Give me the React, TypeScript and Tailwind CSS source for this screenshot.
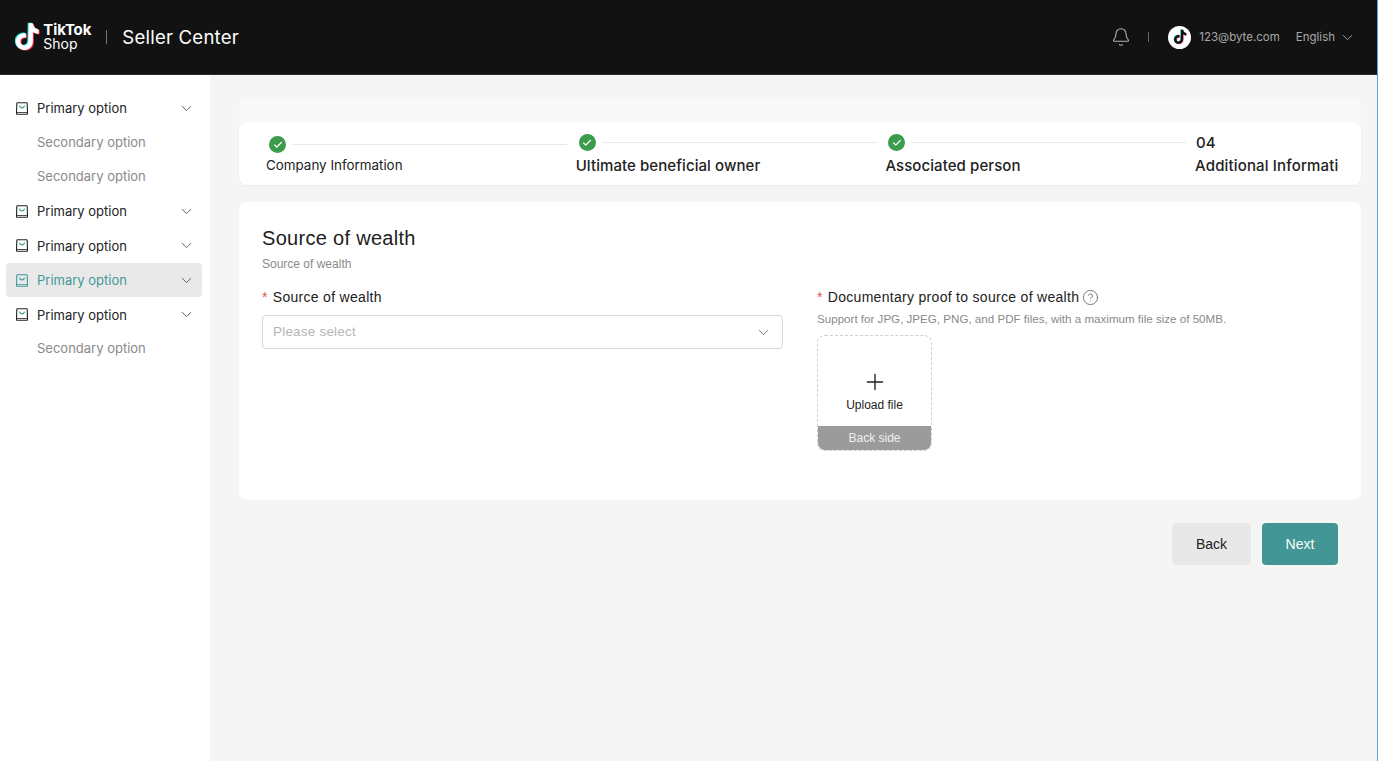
import { ChevronDown, Bell, Check, Plus, CircleHelp } from "lucide-react";

const sans = "font-['Inter',sans-serif]";
const arial = "font-['Liberation_Sans',sans-serif]";

function Note({ h }: { h: number }) {
  const d = "M14.6 1.5h3.3c.3 2.7 1.9 4.6 4.6 4.9v3.4c-1.7.1-3.2-.4-4.6-1.3v7.4c0 4-3 6.9-6.7 6.9-4 0-6.9-3.1-6.9-6.700 0-4.200 3.600-7.300 8-6.600v3.600c-2.300-.6-4.400.9-4.400 3 0 1.800 1.400 3.100 3.100 3.100 1.800 0 3.300-1.300 3.300-3.500z";
  return (
    <svg height={h} width={(h * 21) / 24} viewBox="2.800 0.500 21 24" className="shrink-0">
      <path d={d} fill="#25f4ee" transform="translate(-.8 -.5)" />
      <path d={d} fill="#fe2c55" transform="translate(.8 .5)" />
      <path d={d} fill="currentColor" />
    </svg>
  );
}

function BagIcon({ active }: { active?: boolean }) {
  const c = active ? "#3f9a96" : "#222222";
  return (
    <svg width="12" height="13" viewBox="0 0 12 13" fill="none" className="shrink-0">
      <path d="M1.500.7h9a.7.7 0 0 1 .7.7l.3 9.600v.5a.8.8 0 0 1-.8.8H1.300a.8.8 0 0 1-.8-.8V11l.3-9.600a.7.7 0 0 1 .7-.7z" stroke={c} strokeWidth="1.100" />
      <path d="M.8 10.500h10.400" stroke={c} strokeWidth=".8" />
      <path d="M3.600 4c.5 1.200 1.400 1.900 2.400 1.900S7.900 5.200 8.400 4" stroke={active ? c : "#3f9a96"} strokeWidth="1.200" strokeLinecap="round" />
    </svg>
  );
}

function Primary({ active }: { active?: boolean }) {
  return (
    <div className={`h-[34.400px] w-[196px] ml-[6px] rounded-[4px] flex items-center pl-[10px] pr-[7.500px] ${active ? "bg-[#e9e9e9] text-[#3f9a96]" : "text-[#222222]"}`}>
      <BagIcon active={active} />
      <span className="ml-[9px] flex-1 text-[13px] leading-5">Primary option</span>
      <ChevronDown size={17} strokeWidth={1.300} className="text-[#555555]" />
    </div>
  );
}

function Secondary() {
  return <div className="h-[34.400px] flex items-center pl-[37px] text-[13px] text-[#8a8a8a]">Secondary option</div>;
}

function Done({ label, first }: { label: string; first?: boolean }) {
  return (
    <div className="w-[309.700px] shrink-0">
      <div className={`flex items-center h-[20px] pl-[3px] ${first ? "mt-[2px]" : ""}`}>
        <span className="w-[17px] h-[17px] rounded-full bg-[#3b9c4b] flex items-center justify-center shrink-0">
          <Check size={10} strokeWidth={3} className="text-white" />
        </span>
        <span className="ml-[6px] w-[275px] h-px bg-[#e8e8e8]" />
      </div>
      <div className={first ? "mt-[.5px] text-[13.400px] leading-5 text-[#222222]" : "mt-[3.500px] text-[15px] tracking-[0.08px] leading-5 font-medium text-[#222222]"}>{label}</div>
    </div>
  );
}

export default function App() {
  return (
    <div className={`${sans} w-[1378px] h-[761px] overflow-hidden flex flex-col bg-[#f5f5f5] border-r border-r-[#5b9be0]`}>
      <header className="h-[75px] shrink-0 bg-[#121212] flex items-center pl-[14px] pr-[21.500px] border-b border-b-[#2a2a2a]">
        <span className="text-white"><Note h={30} /></span>
        <div className="ml-[3px] text-white flex flex-col">
          <span className="text-[15px] leading-[14px] font-bold tracking-[-0.1px]">TikTok</span>
          <span className="text-[14px] leading-[14px]">Shop</span>
        </div>
        <span className="ml-[15px] w-px h-[14px] bg-[#777777]" />
        <span className="ml-[15px] text-[18.600px] leading-6 text-white tracking-[0.2px]">Seller Center</span>
        <div className="flex-1" />
        <Bell size={20} strokeWidth={1.300} className="text-[#b5b5b5]" />
        <span className="ml-[17px] w-px h-[10px] bg-[#666666]" />
        <span className="ml-[19px] w-[23px] h-[23px] rounded-full bg-white text-[#111111] flex items-center justify-center"><Note h={16} /></span>
        <span className="ml-[8px] text-[11.500px] text-[#a8a8a8] mt-[1px]">123@byte.com</span>
        <span className="ml-[16px] text-[11.500px] text-[#a8a8a8] mt-[1px]">English</span>
        <ChevronDown size={17} strokeWidth={1.300} className="ml-[3.500px] text-[#a8a8a8]" />
      </header>
      <div className="flex flex-1 min-h-0">
        <aside className="w-[210px] shrink-0 bg-white pt-[16px]">
          <Primary />
          <Secondary />
          <Secondary />
          <Primary />
          <Primary />
          <Primary active />
          <Primary />
          <Secondary />
        </aside>
        <main className="flex-1 min-w-0 pl-[29px] pr-[16px] pt-[23px]">
          <div className="bg-[#f8f8f8] pt-[24px] rounded-t-[4px]">
            <section className="h-[63px] bg-white rounded-[8px] shadow-[0_1px_2px_rgba(0,0,0,0.05)] pl-[27px] pr-[22.500px] pt-[10.500px]">
              <div className="flex overflow-hidden">
                <Done first label="Company Information" />
                <Done label="Ultimate beneficial owner" />
                <Done label="Associated person" />
                <div className="w-[310px] shrink-0 whitespace-nowrap">
                  <div className="h-[20px] pl-[1px] text-[15px] leading-5 font-medium text-[#222222]">04</div>
                  <div className="mt-[3.500px] text-[15px] tracking-[0.15px] leading-5 font-medium text-[#222222]">Additional Information</div>
                </div>
              </div>
            </section>
          </div>
          <section className={`${arial} mt-[17px] h-[298px] bg-white rounded-[8px] pl-[23px] pr-[23px] pt-[24px]`}>
            <h1 className="text-[20px] leading-6 text-[#222222] tracking-[0.3px]">Source of wealth</h1>
            <p className="mt-[6px] text-[12px] leading-4 text-[#8a8a8a]">Source of wealth</p>
            <div className="mt-[15px] flex">
              <div className="w-[521px] shrink-0">
                <div className="h-[20px] flex items-center text-[14px] text-[#222222] tracking-[0.3px]">
                  <span className="text-[#e0505c] mr-[5px]">*</span>Source of wealth
                </div>
                <div className="mt-[8px] h-[34px] rounded-[4px] border border-[#d6d6d6] flex items-center pl-[10px] pr-[10px]">
                  <span className="flex-1 text-[13.500px] text-[#b5b5b5] tracking-[0.2px]">Please select</span>
                  <ChevronDown size={17} strokeWidth={1.300} className="text-[#666666]" />
                </div>
              </div>
              <div className="ml-[34px] flex-1">
                <div className="h-[20px] flex items-center text-[14px] text-[#222222] tracking-[0.3px]">
                  <span className="text-[#e0505c] mr-[5px]">*</span>Documentary proof to source of wealth
                  <CircleHelp size={17} strokeWidth={1.100} className="ml-[3px] text-[#555555]" />
                </div>
                <p className="mt-[4px] text-[11.600px] leading-4 text-[#8a8a8a]">Support for JPG, JPEG, PNG, and PDF files, with a maximum file size of 50MB.</p>
                <div className="mt-[8px] w-[115px] h-[116px] rounded-[8px] border border-dashed border-[#cfcfcf] overflow-hidden flex flex-col">
                  <div className="flex-1 flex flex-col items-center justify-end pb-[13px] text-[#222222]">
                    <Plus size={26} strokeWidth={1.300} />
                    <span className="mt-[2px] text-[12px] leading-4">Upload file</span>
                  </div>
                  <div className="h-[24px] bg-[#9b9b9b] text-white/85 text-[12px] flex items-center justify-center">Back side</div>
                </div>
              </div>
            </div>
          </section>
          <div className={`${arial} mt-[23px] flex justify-end gap-[11px] pr-[23px]`}>
            <button className="w-[79px] h-[42px] rounded-[4px] bg-[#e8e8e8] text-[14px] text-[#222222]">Back</button>
            <button className="w-[76px] h-[42px] rounded-[4px] bg-[#429694] text-[14px] text-white">Next</button>
          </div>
        </main>
      </div>
    </div>
  );
}
